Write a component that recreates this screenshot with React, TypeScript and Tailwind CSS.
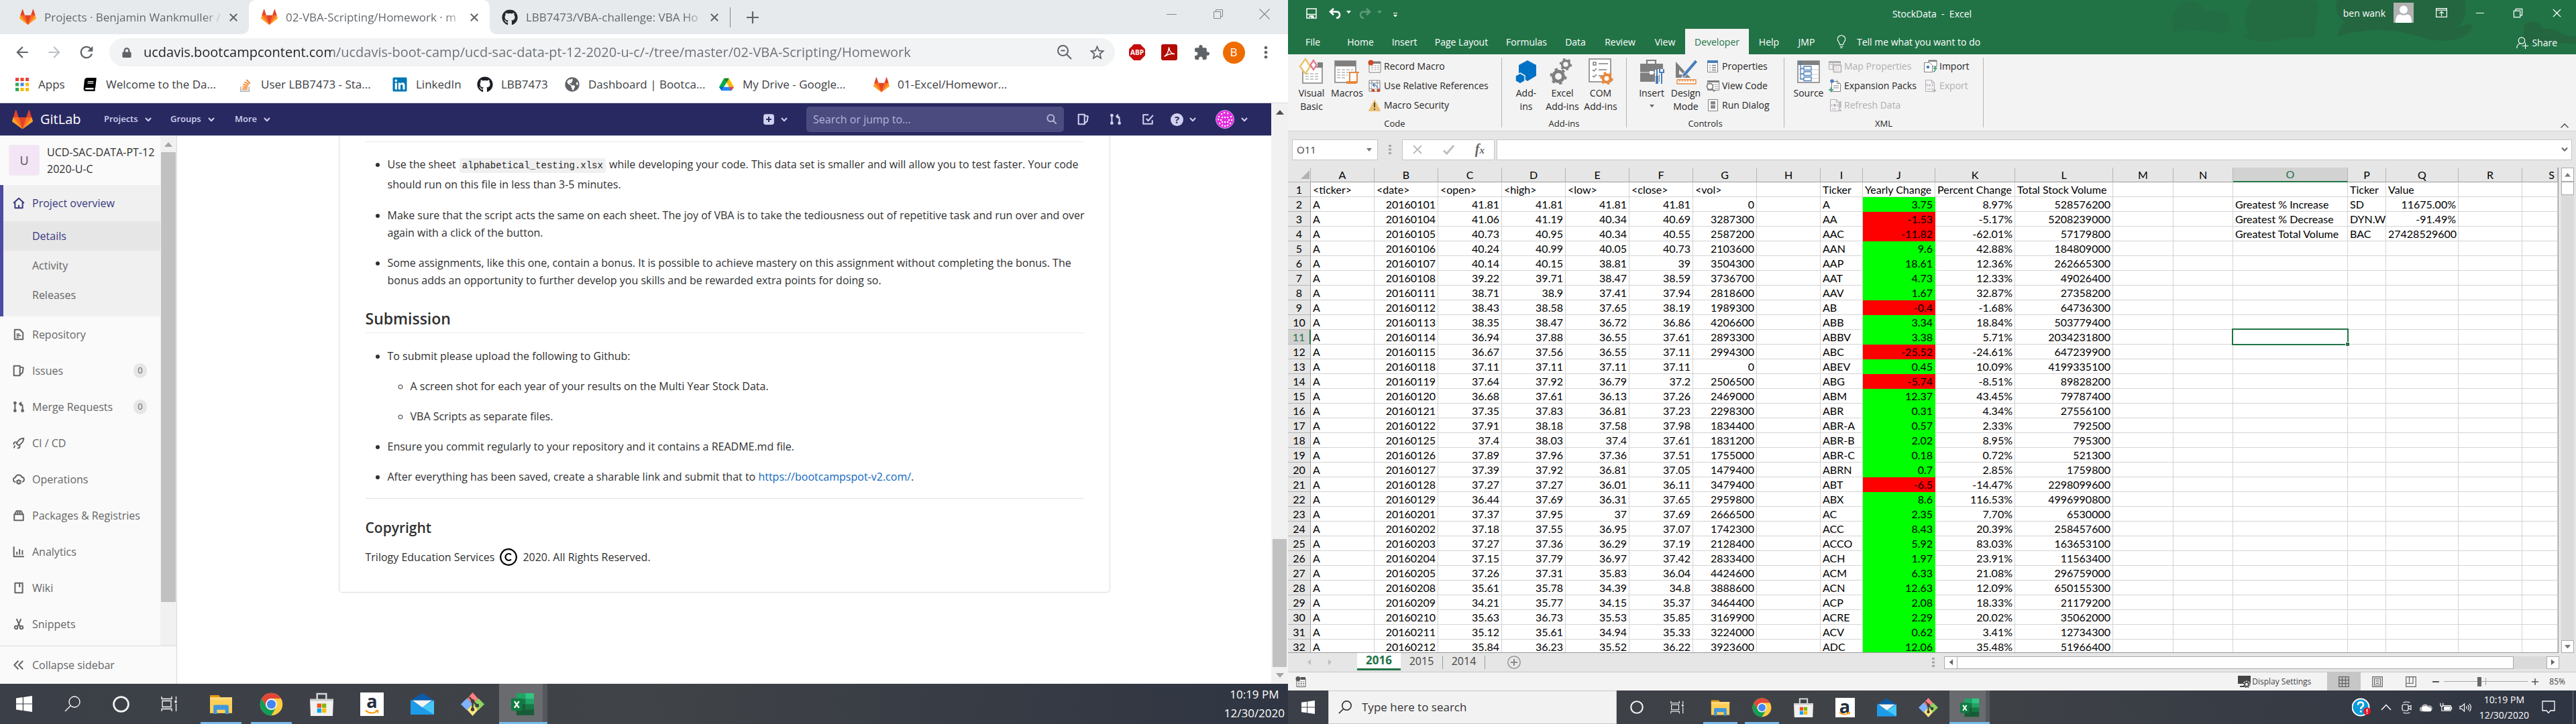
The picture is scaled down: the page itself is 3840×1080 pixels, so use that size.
import type { ReactNode } from "react";
import { FaGithub, FaLinkedin, FaLock, FaGlobeAmericas, FaBook } from "react-icons/fa";
import { MdExtension, MdRefresh, MdArrowBack, MdArrowForward, MdStarBorder, MdMoreVert } from "react-icons/md";

/* ---------- shared glyphs ---------- */

function Tanuki({ className = "" }: { className?: string }) {
  return (
    <svg viewBox="0 0 36 36" className={className} aria-hidden="true">
      <path fill="#e24329" d="M2 14l9.38 9v-9l-4-12.28c-.2-.63-1.17-.63-1.38 0z" />
      <path fill="#e24329" d="M34 14l-9.38 9v-9l4-12.28c.2-.63 1.17-.63 1.38 0z" />
      <path fill="#e24329" d="M18 34.38L3 14h30z" />
      <path fill="#fc6d26" d="M18 34.38L11.38 14H2l4 11z" />
      <path fill="#fc6d26" d="M18 34.38L24.62 14H34l-4 11z" />
      <path fill="#fca326" d="M2 14L.1 20.16c-.18.57 0 1.2.5 1.56L18 34.38z" />
      <path fill="#fca326" d="M34 14l1.9 6.16c.18.57 0 1.2-.5 1.56L18 34.38z" />
    </svg>
  );
}

function Cross({ className = "", w = 2 }: { className?: string; w?: number }) {
  return (
    <svg viewBox="0 0 16 16" className={className} fill="none" stroke="currentColor" strokeWidth={w} aria-hidden="true">
      <path d="M2 2l12 12M14 2L2 14" />
    </svg>
  );
}

function Chevron({ className = "" }: { className?: string }) {
  return (
    <svg viewBox="0 0 10 8" className={className} fill="none" stroke="currentColor" strokeWidth="2" strokeLinecap="round" strokeLinejoin="round" aria-hidden="true">
      <path d="M1.5 2L5 5.7 8.500 2" />
    </svg>
  );
}

function Restore({ className = "", w = 1 }: { className?: string; w?: number }) {
  return (
    <svg viewBox="0 0 16 16" className={className} fill="none" stroke="currentColor" strokeWidth={w} aria-hidden="true">
      <path d="M1.500 4.500h10v10h-10zM4.500 4.500v-3h10v10h-3" />
    </svg>
  );
}

function Magnifier({ className = "", w = 1.500, flip = false }: { className?: string; w?: number; flip?: boolean }) {
  return (
    <svg viewBox="0 0 24 24" className={className} fill="none" stroke="currentColor" strokeWidth={w} aria-hidden="true">
      {flip ? <path d="M9 15L1 23M15 1a8 8 0 1 1 0 16 8 8 0 0 1 0-16z" /> : <path d="M15 15l7 7M9.500 2a7.500 7.500 0 1 1 0 15 7.500 7.500 0 0 1 0-15z" />}
    </svg>
  );
}

/* ---------- browser ---------- */

function BrowserTab({ icon, title, active, box }: { icon: ReactNode; title: string; active?: boolean; box: string }) {
  return (
    <div className={`flex h-full shrink-0 items-center pr-[13px] ${box} ${active ? "rounded-t-[10px] bg-white" : ""}`}>
      <button className="flex min-w-0 flex-1 items-center gap-3 text-left">
        <span className="flex w-[25px] shrink-0 justify-center">{icon}</span>
        <span className="bg-[linear-gradient(90deg,#5f6368_236px,#5f636830_262px)] bg-clip-text text-[17px] whitespace-nowrap text-transparent">{title}</span>
      </button>
      <button aria-label="Close tab" className="ml-[11px] flex w-5 justify-center text-[#5f6368]">
        <Cross className="size-[14px]" w={2.200} />
      </button>
    </div>
  );
}

function TabStrip() {
  return (
    <div className="flex h-[51px] shrink-0 bg-white">
      <div className="rounded-br-[10px] bg-[#e7eaed]">
        <BrowserTab box="w-[371px] pl-[29px]" icon={<Tanuki className="size-[25px]" />} title="Projects · Benjamin Wankmuller /" />
      </div>
      <div className="bg-[linear-gradient(#e7eaed_50%,#fff_50%)]">
        <BrowserTab active box="w-[359px] pl-[18px]" icon={<Tanuki className="size-[25px]" />} title="02-VBA-Scripting/Homework · m" />
      </div>
      <div className="flex flex-1 items-center rounded-bl-[10px] bg-[#e7eaed]">
        <BrowserTab box="w-[358px] pl-[17px]" icon={<FaGithub className="size-6 text-[#24292e]" />} title="LBB7473/VBA-challenge: VBA Ho" />
        <span className="h-[30px] w-px bg-[#80868b]" />
        <button aria-label="New tab" className="ml-6 text-[#5f6368]">
          <svg viewBox="0 0 18 18" className="size-[18px]" stroke="currentColor" strokeWidth="2.200"><path d="M9 0v18M0 9h18" /></svg>
        </button>
        <div className="ml-auto flex h-full items-start pr-[1px] text-[#80868b]">
          <button aria-label="Minimize" className="flex h-[42px] w-[69px] items-center justify-center"><span className="h-px w-[15px] bg-current" /></button>
          <button aria-label="Restore" className="flex h-[42px] w-[69px] items-center justify-center"><Restore className="size-4" /></button>
          <button aria-label="Close" className="flex h-[42px] w-[69px] items-center justify-center"><Cross className="size-5" w={0.9} /></button>
        </div>
      </div>
    </div>
  );
}

function ToolButton({ label, children }: { label: string; children: ReactNode }) {
  return <button aria-label={label} className="flex h-[42px] w-12 shrink-0 items-center justify-center">{children}</button>;
}

function Toolbar() {
  return (
    <div className="flex h-[54px] shrink-0 items-center px-[9px] text-[#5f6368]">
      <ToolButton label="Back"><MdArrowBack className="size-[26px]" /></ToolButton>
      <ToolButton label="Forward"><MdArrowForward className="size-[26px] text-[#bdc1c6]" /></ToolButton>
      <ToolButton label="Reload"><MdRefresh className="size-[28px]" /></ToolButton>
      <div className="ml-[10px] flex h-[42px] flex-1 items-center rounded-full bg-[#f1f3f4] pr-[3px] pl-4">
        <FaLock className="w-5 text-[15px]" />
        <input
          aria-label="Address"
          className="ml-[15px] min-w-0 flex-1 bg-[linear-gradient(90deg,#202124_281px,#6b6f74_281px)] bg-clip-text text-[20px] text-transparent outline-none"
          defaultValue="ucdavis.bootcampcontent.com/ucdavis-boot-camp/ucd-sac-data-pt-12-2020-u-c/-/tree/master/02-VBA-Scripting/Homework"
        />
        <ToolButton label="Zoom">
          <svg viewBox="0 0 24 24" className="size-6" fill="none" stroke="currentColor" strokeWidth="2"><path d="M15 15l7 7M9.500 2a7.500 7.500 0 1 1 0 15 7.500 7.500 0 0 1 0-15zM6.500 9.500h6" /></svg>
        </ToolButton>
        <ToolButton label="Bookmark"><MdStarBorder className="size-[27px]" /></ToolButton>
      </div>
      <div className="ml-[9px] flex">
        <ToolButton label="Adblock Plus">
          <span className="flex size-6 items-center justify-center bg-[#c70d0d] text-[10px] font-bold text-white [clip-path:polygon(30%_0,70%_0,100%_30%,100%_70%,70%_100%,30%_100%,0_70%,0_30%)]">ABP</span>
        </ToolButton>
        <ToolButton label="Adobe Acrobat">
          <svg viewBox="0 0 24 24" className="size-6"><rect width="24" height="24" rx="3" fill="#b30b00" /><path d="M5 18c3-2 6-7 6.500-13 1 6 4 9 8 9.500-4-.5-9 0-13 3" fill="none" stroke="#fff" strokeWidth="1.500" strokeLinecap="round" strokeLinejoin="round" /></svg>
        </ToolButton>
        <ToolButton label="Extensions"><MdExtension className="size-[25px]" /></ToolButton>
        <ToolButton label="Profile"><span className="flex size-[33px] items-center justify-center rounded-full bg-[#ef6c00] text-[17px] text-white">B</span></ToolButton>
        <ToolButton label="Menu"><MdMoreVert className="size-[28px]" /></ToolButton>
      </div>
    </div>
  );
}

const appColors = ["#ea4335", "#ea4335", "#ea4335", "#34a853", "#4285f4", "#fbbc04", "#34a853", "#fbbc04", "#fbbc04"];

const bookmarks: { label: string; box: string; icon: ReactNode }[] = [
  { label: "Apps", box: "w-[101px]", icon: <svg viewBox="0 0 20 20" className="size-5">{appColors.map((c, i) => <rect key={i} x={(i % 3) * 7.500} y={Math.floor(i / 3) * 7.500} width="5" height="5" fill={c} />)}</svg> },
  { label: "Welcome to the Da...", box: "w-[231px]", icon: <FaBook className="size-5 -skew-x-6 text-black" /> },
  {
    label: "User LBB7473 - Sta...", box: "w-[231px]",
    icon: <svg viewBox="0 0 20 22" className="size-[21px]" fill="none" strokeWidth="2"><path d="M3 14v7h13v-7" stroke="#bcbbbb" /><path d="M5.500 17.500h8M5.700 14l8 .9M6.700 10.300l7.700 2.200M8.800 6.500l7 4M12 3l5.500 6" stroke="#f48024" /></svg>,
  },
  { label: "LinkedIn", box: "w-[127px]", icon: <FaLinkedin className="size-6 text-[#0077b5]" /> },
  { label: "LBB7473", box: "w-[130px]", icon: <FaGithub className="size-6 text-[#1b1f23]" /> },
  { label: "Dashboard | Bootca...", box: "w-[230px]", icon: <FaGlobeAmericas className="size-[22px] text-[#5f6368]" /> },
  {
    label: "My Drive - Google...", box: "w-[231px]",
    icon: <svg viewBox="0 0 24 22" className="size-[22px]"><path d="M8 1h8l8 14h-8z" fill="#ffba00" /><path d="M8 1l4 7-8 13-4-6z" fill="#00ac47" /><path d="M8 15h16l-4 6H4z" fill="#2684fc" /><path d="M0 15h8l-4 6z" fill="#0066da" /><path d="M16 15h8l-4 6z" fill="#ea4335" /><path d="M8 1h8l-4 7z" fill="#00832d" /></svg>,
  },
  { label: "01-Excel/Homewor...", box: "", icon: <Tanuki className="size-[25px]" /> },
];

function Bookmarks() {
  return (
    <nav aria-label="Bookmarks" className="flex h-[49px] shrink-0 items-center border-b border-[#dadce0] pb-[6px] pl-[21px] text-[17px] text-[#3c4043]">
      {bookmarks.map((b) => (
        <a key={b.label} href="#" className={`flex shrink-0 items-center gap-3 whitespace-nowrap ${b.box}`}>
          <span className="flex w-6 justify-center">{b.icon}</span>
          {b.label}
        </a>
      ))}
    </nav>
  );
}

/* ---------- gitlab ---------- */

const glyphs: Record<string, ReactNode> = {
  home: <path d="M1 8l7-6.500L15 8M3 7v7.500h10V7M8 14v-3.500" />,
  doc: <><path d="M2.500 1.500h7l4 4v9h-11z" /><path d="M5 7.500h4M5 9.500h6M5 11.800h3" strokeWidth="1.500" /></>,
  issues: <path d="M1.500 1.500h8v13h-8zM10 3l4 1-1 6.500L10 13" />,
  merge: <><path d="M3 4v8M13 12V7q0-3-4-3M11.500 1.500L9 4l2.500 2.500" /><circle cx="3" cy="2.800" r="1.200" fill="currentColor" /><circle cx="3" cy="13" r="1.200" fill="currentColor" /><circle cx="13" cy="13" r="1.200" fill="currentColor" /></>,
  rocket: <><path d="M14.500 1.500Q8.500 1.500 5 8.500L7.500 11Q14.500 7.500 14.500 1.500z" /><path d="M5 6.500L2 7l-1 3M9.500 11l-.5 3-3 1M3 11l-1.500 3.500" /></>,
  cloud: <><path d="M4 11.500a3 3 0 0 1-.500-6A4.500 4.500 0 0 1 12 5a3.300 3.300 0 0 1 .500 6.500" /><circle cx="8" cy="11.500" r="2.200" /><path d="M8 7.800v1.500M8 13.700v1.500M4.800 9.700l1.300.8M9.900 12.500l1.300.8M11.200 9.700l-1.300.8M6.100 12.500l-1.300.8" strokeWidth="1.300" /></>,
  pack: <path d="M2 6.500h12v8H2zM2.500 6.500L5 2h6l2.500 4.500M6 6.500L7 3M10 6.500L9 3" />,
  chart: <path d="M1.500 1v13.500H15M5.500 8v4M9 4.500V12M12.800 6v6" />,
  wiki: <path d="M3 1.500h10v13H3zM9 2v5" />,
  snip: <><path d="M5 1l4.500 10M11 1L6.500 11" /><circle cx="4.500" cy="12.500" r="2" /><circle cx="11.500" cy="12.500" r="2" /></>,
  collapse: <path d="M7.500 2.500L2 8l5.500 5.500M13.500 2.500L8 8l5.500 5.500" />,
  plus: <><rect x="1" y="1" width="14" height="14" rx="3" fill="currentColor" stroke="none" /><path d="M8 4.500v7M4.500 8h7" stroke="#292961" /></>,
  todo: <path d="M9 2H2v12h12V9M6 7l2.500 3L15 2.500" />,
};

function Glyph({ name, className = "size-[18px]" }: { name: string; className?: string }) {
  return <svg viewBox="0 0 16 16" className={`shrink-0 ${className}`} fill="none" stroke="currentColor" strokeWidth="1.800" strokeLinejoin="round" aria-hidden="true">{glyphs[name]}</svg>;
}

const avatarDots = [[9, 6], [13, 4], [18, 5], [5, 10], [10, 11], [14, 11], [18, 11], [23, 10], [4, 14], [8, 15], [20, 15], [24, 15], [10, 18], [14, 18], [18, 18], [6, 20], [22, 20], [10, 23], [14, 24], [18, 23]];

function NavMenu({ label, box }: { label: string; box: string }) {
  return (
    <button className={`flex items-center gap-[10px] text-[13px] font-semibold ${box}`}>
      {label}
      <Chevron className="h-[9px] w-[10px]" />
    </button>
  );
}

function GitlabHeader() {
  return (
    <header className="flex h-12 shrink-0 items-center bg-[#292961] pr-[35px] pl-[18px] text-[#d1d1f0]">
      <a href="#" className="flex w-[137px] items-center gap-[11px] text-[20px] font-medium text-white">
        <Tanuki className="size-[31px]" />
        GitLab
      </a>
      <NavMenu label="Projects" box="w-[99px]" />
      <NavMenu label="Groups" box="w-[96px]" />
      <NavMenu label="More" box="" />
      <div className="ml-auto flex items-center">
        <button aria-label="New" className="flex items-center gap-[9px]"><Glyph name="plus" /><Chevron className="h-[9px] w-[10px]" /></button>
        <label className="mr-[5px] ml-[28px] flex h-[38px] w-[384px] items-center rounded-[5px] bg-[#4b4b7f] px-[10px]">
          <input aria-label="Search" placeholder="Search or jump to..." className="min-w-0 flex-1 text-[16px] outline-none placeholder:text-[#b4b4dc]" />
          <Magnifier className="size-4 text-[#b4b4dc]" w={3} />
        </label>
        <button aria-label="Issues" className="flex w-12 justify-center"><Glyph name="issues" /></button>
        <button aria-label="Merge requests" className="flex w-12 justify-center"><Glyph name="merge" /></button>
        <button aria-label="To-do list" className="flex w-12 justify-center"><Glyph name="todo" /></button>
        <button aria-label="Help" className="ml-[10px] flex items-center gap-[9px]">
          <span className="flex size-[19px] items-center justify-center rounded-full bg-[#d1d1f0] text-[15px] font-bold text-[#292961]">?</span>
          <Chevron className="h-[9px] w-[10px]" />
        </button>
        <button aria-label="Account" className="ml-[29px] flex items-center gap-[10px]">
          <svg viewBox="0 0 28 28" className="size-7"><circle cx="14" cy="14" r="13.500" fill="#e62be0" stroke="#c9a9e8" />{avatarDots.map(([x, y], i) => <rect key={i} x={x - 1} y={y - 1} width="2.200" height="2.200" fill="#fff" />)}</svg>
          <Chevron className="h-[9px] w-[10px]" />
        </button>
      </div>
    </header>
  );
}

const sideItems: [string, string, boolean?][] = [
  ["doc", "Repository"], ["issues", "Issues", true], ["merge", "Merge Requests", true], ["rocket", "CI / CD"], ["cloud", "Operations"],
  ["pack", "Packages & Registries"], ["chart", "Analytics"], ["wiki", "Wiki"], ["snip", "Snippets"],
];

function Sidebar() {
  return (
    <aside className="flex w-[264px] shrink-0 flex-col border-r border-[#dbdbdb] bg-[#fafafa] text-[16px] text-[#666]">
      <div className="flex min-h-0 flex-1">
        <div className="flex min-w-0 flex-1 flex-col overflow-hidden">
          <a href="#" className="flex h-[73px] shrink-0 gap-[11px] pt-[12px] pl-[13px] leading-[25px] font-medium whitespace-nowrap text-[#303030]">
            <span className="mt-px flex size-[46px] shrink-0 items-center justify-center rounded-[4px] border border-[#eee] bg-[#f3e5f5] text-[18px] font-normal text-[#555]">U</span>
            <span>UCD-SAC-DATA-PT-12<br />2020-U-C</span>
          </a>
          <div className="shrink-0 border-l-[5px] border-[#4b4ba3] bg-[#f0f0f0] pb-[10px]">
            <a href="#" className="flex h-[54px] items-center gap-[11px] pl-[14px] font-medium text-[#393982]"><Glyph name="home" />Project overview</a>
            <a href="#" className="flex h-11 items-center bg-[#e6e6e6] pl-[43px] font-medium text-[#393982]">Details</a>
            <a href="#" className="flex h-11 items-center pl-[43px]">Activity</a>
            <a href="#" className="flex h-11 items-center pl-[43px]">Releases</a>
          </div>
          {sideItems.map(([icon, label, badge]) => (
            <a key={label} href="#" className="flex h-[54px] shrink-0 items-center gap-[11px] pr-5 pl-[19px]">
              <Glyph name={icon} />
              <span className="whitespace-nowrap">{label}</span>
              {badge && <span className="ml-auto flex h-[22px] w-5 items-center justify-center rounded-full bg-[#e6e6e6] text-[13px]">0</span>}
            </a>
          ))}
        </div>
        <div className="flex w-[24px] shrink-0 flex-col bg-[#f1f1f1] px-px">
          <span className="flex h-6 items-center justify-center"><svg viewBox="0 0 12 7" className="w-3" fill="#a3a3a3"><path d="M6 0l6 7H0z" /></svg></span>
          <span className="h-[671px] bg-[#c1c1c1]" />
        </div>
      </div>
      <button className="flex h-[57px] shrink-0 items-center gap-[11px] border-t border-[#dbdbdb] pl-[19px]"><Glyph name="collapse" />Collapse sidebar</button>
    </aside>
  );
}

function Readme() {
  return (
    <main className="min-w-0 flex-1 text-[16px] leading-[26px] text-[#303030]">
      <article className="mx-auto w-full max-w-[1150px] rounded-b-[5px] border border-t-0 border-[#dbdbdb] px-[39px] pt-2 pb-[39px]">
        <hr className="border-[#eaeaea]" />
        <ul className="mt-[19px] flex list-disc flex-col gap-[19px] pl-[33px] whitespace-nowrap">
          <li className="leading-[28px]">
            Use the sheet <code className="mx-px rounded-[4px] bg-[#f0f0f0] px-1 py-[3px] font-['Liberation_Mono',monospace] text-[14px] text-[#1f1f1f]">alphabetical_testing.xlsx</code> while developing your code. This data set is smaller and will allow you to test faster. Your code<br />should run on this file in less than 3-5 minutes.
          </li>
          <li>Make sure that the script acts the same on each sheet. The joy of VBA is to take the tediousness out of repetitive task and run over and over<br />again with a click of the button.</li>
          <li>Some assignments, like this one, contain a bonus. It is possible to achieve mastery on this assignment without completing the bonus. The<br />bonus adds an opportunity to further develop you skills and be rewarded extra points for doing so.</li>
        </ul>
        <h2 className="mt-[29px] border-b border-[#eaeaea] pb-[6px] text-[23px] leading-[30px] font-semibold">Submission</h2>
        <ul className="mt-[21px] flex list-disc flex-col gap-[19px] pl-[33px]">
          <li>
            To submit please upload the following to Github:
            <ul className="mt-[19px] flex list-[circle] flex-col gap-[19px] pl-[34px]">
              <li>A screen shot for each year of your results on the Multi Year Stock Data.</li>
              <li>VBA Scripts as separate files.</li>
            </ul>
          </li>
          <li>Ensure you commit regularly to your repository and it contains a README.md file.</li>
          <li>After everything has been saved, create a sharable link and submit that to <a href="#" className="text-[#1068bf]">https://bootcampspot-v2.com/</a>.</li>
        </ul>
        <hr className="mt-[19px] border-[#e1e1e1]" />
        <h3 className="mt-[30px] text-[21px] font-semibold">Copyright</h3>
        <p className="mt-[18px] flex items-center gap-2">
          Trilogy Education Services
          <svg viewBox="0 0 26 26" className="size-[26px]" fill="none" stroke="#000" role="img" aria-label="Copyright"><circle cx="13" cy="13" r="11.800" strokeWidth="2.200" /><path d="M17 9.500a5 5 0 1 0 0 7" strokeWidth="2.200" /></svg>
          2020. All Rights Reserved.
        </p>
      </article>
    </main>
  );
}

/* ---------- taskbar icons ---------- */

const WindowsLogo = ({ className = "" }) => (
  <svg viewBox="0 0 24 24" className={className} fill="#fff"><path d="M0 3.400L9.800 2v9.500H0zM11 1.900L24 0v11.500H11zM0 12.500h9.800V22L0 20.600zM11 12.500h13V24l-13-1.900z" /></svg>
);
const CortanaRing = ({ className = "" }) => (
  <svg viewBox="0 0 24 24" className={className} fill="none" stroke="#f2f2f2" strokeWidth="2.600"><circle cx="12" cy="12" r="10.500" /></svg>
);
const TaskView = ({ className = "" }) => (
  <svg viewBox="0 0 24 24" className={className} fill="none" stroke="#fff" strokeWidth="1.300"><path d="M1 1v3.500h15V1M1 23v-3.500h15V23M2 7.500h13v9H2zM22.500 1v5M22.500 12v11" /><path d="M20.500 7h3v3.500h-3z" fill="#fff" stroke="none" /></svg>
);

const apps: { name: string; icon: ReactNode; open?: boolean; active?: boolean }[] = [
  { name: "File Explorer", open: true, icon: <svg viewBox="0 0 34 32" className="size-full"><path d="M1 3h13l3 4h-16z" fill="#e39c12" /><rect x="1" y="6" width="32" height="23" fill="#ffcf56" /><path d="M1 6h32v4H1z" fill="#ffd877" /><path d="M6 30V19q0-2 2-2h18q2 0 2 2v11h-5v-6H11v6z" fill="#3f97dd" /></svg> },
  { name: "Google Chrome", open: true, icon: <svg viewBox="0 0 48 48" className="size-full"><circle cx="24" cy="24" r="23" fill="#ffcd40" /><path d="M4.100 12.500A23 23 0 0 1 43.900 12.500H24a11.500 11.500 0 0 0-10 17.200z" fill="#e2463a" /><path d="M4.100 12.500A23 23 0 0 0 24 47l10-17.300A11.500 11.500 0 0 1 14 29.700z" fill="#0f9d58" /><circle cx="24" cy="24" r="11.500" fill="#f1f1f1" /><circle cx="24" cy="24" r="9" fill="#4285f4" /></svg> },
  { name: "Microsoft Store", icon: <svg viewBox="0 0 36 36" className="size-full"><path d="M11 12V2h14v10" fill="none" stroke="#d5d5d5" strokeWidth="2.500" /><path d="M0 10h36l-1 26H1z" fill="#f1f1f1" /><path d="M0 10h36v3H0z" fill="#cfcfcf" /><path d="M11 17h6.500v6.500H11z" fill="#f25022" /><path d="M18.500 17H25v6.500h-6.500z" fill="#7fba00" /><path d="M11 24.500h6.500V31H11z" fill="#00a4ef" /><path d="M18.500 24.500H25V31h-6.500z" fill="#ffb900" /></svg> },
  { name: "Amazon", icon: <span className="flex size-full flex-col items-center bg-white"><span className="h-3/4 text-[27px] leading-[26px] font-bold text-[#232f3e]">a</span><svg viewBox="0 0 24 7" className="w-3/5" fill="none" stroke="#f90" strokeWidth="2.200"><path d="M1 1q10 8 20 1M18 1h4v4" /></svg></span> },
  { name: "Mail", icon: <svg viewBox="0 0 36 34" className="size-full"><path d="M0 11L18 0l18 11z" fill="#0b5aa8" /><path d="M0 11h36v22H0z" fill="#1a8fe0" /><path d="M0 11l36 22H0z" fill="#1e9be8" /><path d="M36 11v22L18 22z" fill="#45c8f5" /><path d="M3 11h30L18 22z" fill="#f4f4f4" /></svg> },
  { name: "Git GUI", icon: <svg viewBox="0 0 36 36" className="size-full"><path d="M18 0l8.500 9.500L18 18l-8.500-8.500z" fill="#ff8080" /><path d="M9 9l9 9-9 9-9-9z" fill="#80b3ff" /><path d="M27 9l9 9-9 9-9-9z" fill="#8dd35f" /><path d="M18 18l8.500 8.500L18 36l-8.500-9.500z" fill="#ffe680" /><path d="M13 7l5 6v13M18 13l7 7" fill="none" stroke="#3d3d3d" strokeWidth="2.400" /><circle cx="18" cy="13" r="2.800" fill="#3d3d3d" /><circle cx="18" cy="26" r="2.800" fill="#3d3d3d" /><circle cx="25" cy="20" r="2.800" fill="#3d3d3d" /></svg> },
  { name: "Excel", active: true, icon: <svg viewBox="0 0 36 34" className="size-full"><path d="M8 0h14v9H8z" fill="#21a366" /><path d="M22 0h13v9H22z" fill="#33c481" /><path d="M8 9h14v8H8z" fill="#107c41" /><path d="M22 9h13v8H22z" fill="#21a366" /><path d="M8 17h14v8H8z" fill="#185c37" /><path d="M22 17h13v8H22z" fill="#107c41" /><path d="M8 25h27v9H8z" fill="#185c37" /><rect x="0" y="8" width="17" height="19" rx="1.500" fill="#107c41" /><path d="M5 12.500l7 10M12 12.500l-7 10" stroke="#fff" strokeWidth="2.400" /></svg> },
];

function AppButton({ app, big }: { app: (typeof apps)[number]; big?: boolean }) {
  return (
    <div className={`flex h-full shrink-0 justify-center ${big ? "w-[75px]" : "w-[62px]"}`}>
      <button aria-label={app.name} className={`flex h-full flex-col items-center ${big ? "w-[72px]" : "w-[60px]"} ${app.active ? "bg-linear-to-r from-[#696b6e] from-90% to-[#54575b] to-90%" : ""}`}>
        <span className="flex flex-1 items-center pt-[3px]"><span className={`flex ${big ? "size-[35px]" : "size-[29px]"}`}>{app.icon}</span></span>
        <span className={`h-[3px] ${app.active ? "w-full" : big ? "w-[61px]" : "w-[51px]"} ${app.open || app.active ? "bg-[#76b9ed]" : ""}`} />
      </button>
    </div>
  );
}

function LeftTaskbar() {
  const cell = "flex h-full w-[72px] items-center justify-center text-white";
  return (
    <footer className="flex h-[60px] shrink-0 bg-linear-to-r from-[#3b3f47] via-[#404347] to-[#2f3542]">
      <button aria-label="Start" className={cell}><WindowsLogo className="size-6" /></button>
      <button aria-label="Search" className={cell}><Magnifier flip className="size-6" w={1.300} /></button>
      <button aria-label="Cortana" className={cell}><CortanaRing className="size-[25px]" /></button>
      <button aria-label="Task view" className={cell}><TaskView className="size-6" /></button>
      <div className="ml-1 flex">{apps.map((a) => <AppButton key={a.name} app={a} big />)}</div>
      <button className="ml-auto flex flex-col items-center justify-center px-[5px] text-[17px] leading-[28px] text-white"><span>10:19 PM</span><span>12/30/2020</span></button>
    </footer>
  );
}

function Browser() {
  return (
    <section aria-label="Browser" className="flex h-screen min-w-0 flex-col overflow-hidden bg-white font-['Open_Sans','Noto_Sans',sans-serif]">
      <TabStrip />
      <Toolbar />
      <Bookmarks />
      <div className="flex min-h-0 flex-1">
        <div className="flex min-w-0 flex-1 flex-col">
          <GitlabHeader />
          <div className="flex min-h-0 flex-1 border-t border-[#dbdbdb]">
            <Sidebar />
            <Readme />
          </div>
        </div>
        <div className="flex w-[25px] shrink-0 flex-col items-center bg-[#f1f1f1]">
          <svg viewBox="0 0 12 7" className="mt-[10px] w-3" fill="#505050"><path d="M6 0l6 7H0z" /></svg>
          <span className="mt-auto h-[191px] w-[21px] bg-[#c1c1c1]" />
          <svg viewBox="0 0 12 7" className="mt-[9px] mb-[9px] w-3" fill="#a3a3a3"><path d="M6 7l6-7H0z" /></svg>
        </div>
      </div>
      <LeftTaskbar />
    </section>
  );
}

/* ---------- excel: title bar and ribbon ---------- */

const Caret = ({ className = "" }) => <svg viewBox="0 0 8 5" className={className} fill="currentColor" aria-hidden="true"><path d="M0 0h8L4 5z" /></svg>;

function TitleBar() {
  return (
    <div className="grid h-[43px] grid-cols-[1fr_auto_1fr] text-[14px] text-white">
      <div className="flex items-center pb-[3px] pl-[27px]">
        <button aria-label="Save"><svg viewBox="0 0 16 16" className="size-4" fill="none" stroke="#fff" strokeWidth="1.500"><path d="M1 1h14v14H1z" /><path d="M4.500 15v-4h7v4" fill="#fff" stroke="none" /><path d="M1 9.500h14" /><path d="M6.500 15v-2" stroke="#217346" /></svg></button>
        <button aria-label="Undo" className="ml-[18px]"><svg viewBox="0 0 18 16" className="h-4 w-[18px]" fill="none" stroke="#fff" strokeWidth="2.600"><path d="M7 .8L2 5.500l5 4.700M2.500 5.500H11q5 0 5 4.500t-5 5" /></svg></button>
        <Caret className="mt-[-4px] ml-[8px] w-[7px]" />
        <button aria-label="Redo" className="ml-[12px] text-[#5c9a78]"><svg viewBox="0 0 18 16" className="h-4 w-[18px]" fill="none" stroke="currentColor" strokeWidth="2.600"><path d="M11 .8l5 4.700-5 4.700M15.500 5.500H7q-5 0-5 4.500t5 5" /></svg></button>
        <Caret className="mt-[-4px] ml-[9px] w-[7px] text-[#5c9a78]" />
        <button aria-label="Customize" className="ml-[17px] flex flex-col items-center gap-[2px] pt-1"><span className="h-px w-[6px] bg-white" /><Caret className="w-[6px]" /></button>
      </div>
      <h1 className="self-center pb-[3px] whitespace-pre">StockData  -  Excel</h1>
      <div className="flex items-center justify-end pb-[5px]">
        <span>ben wank</span>
        <svg viewBox="0 0 30 30" className="mr-[13px] ml-3 size-[30px]"><path fill="#b2b2b2" d="M0 0h30v30H0z" /><circle cx="15" cy="10.500" r="6" fill="#fff" /><path d="M3 30q0-13 7-12.500 5 2.500 10 0Q27 17 27 30z" fill="#fff" /></svg>
        <button aria-label="Ribbon display options" className="flex w-[57px] justify-center"><svg viewBox="0 0 17 14" className="h-[14px] w-[17px]" fill="none" stroke="#fff" strokeWidth="1.200"><path d="M.6.600h15.800v12.800H.6zM.6 3.200h15.800M8.500 12V5.500M5.500 8l3-2.800 3 2.800" /></svg></button>
        <button aria-label="Minimize" className="flex w-[57px] justify-center"><span className="h-px w-3 bg-white" /></button>
        <button aria-label="Restore" className="flex w-[57px] justify-center"><Restore className="size-[15px]" w={1.300} /></button>
        <button aria-label="Close" className="flex w-[58px] justify-center"><Cross className="size-[15px]" w={1.400} /></button>
      </div>
    </div>
  );
}

const ribbonTabs: [string, string][] = [
  ["File", "w-[74px]"], ["Home", "w-[68px]"], ["Insert", "w-[63px]"], ["Page Layout", "w-[107px]"], ["Formulas", "w-[87px]"], ["Data", "w-[59px]"],
  ["Review", "w-[74px]"], ["View", "w-[60px]"], ["Developer", "w-[95px]"], ["Help", "w-[60px]"], ["JMP", "w-[52px]"],
];

function RibbonTabs() {
  return (
    <div className="flex h-[38px] text-[14px] text-white">
      {ribbonTabs.map(([t, w]) => (
        <button key={t} className={`shrink-0 whitespace-nowrap ${w} ${t === "Developer" ? "bg-[#f3f3f3] text-[#217346]" : ""}`}>{t}</button>
      ))}
      <button className="ml-[19px] flex items-center gap-4">
        <svg viewBox="0 0 14 20" className="h-5 w-[14px]" fill="none" stroke="#fff" strokeWidth="1.200"><path d="M4.500 14.500q0-2-2-4.500a5.700 5.700 0 1 1 9 0q-2 2.500-2 4.500zM4.500 17h5M5.500 19.200h3" /></svg>
        Tell me what you want to do
      </button>
      <button className="ml-auto flex items-center gap-[5px] pt-[3px] pr-7">
        <svg viewBox="0 0 18 18" className="size-[18px]" fill="none" stroke="#fff" strokeWidth="1.200"><circle cx="8" cy="5.500" r="4.700" /><path d="M.8 17q.2-6.500 5.500-7M8.500 13.500H18M13.500 9v9" /></svg>
        Share
      </button>
    </div>
  );
}

const big: Record<string, ReactNode> = {
  vb: <><path d="M7 14h29v24H7z" fill="#fff" stroke="#7f7f7f" strokeWidth="1.500" /><path d="M29 7h8v8h-8z" fill="#7f7f7f" /><path d="M11 24h21M11 28h21M11 32h21" stroke="#b5b5b5" strokeWidth="1.500" strokeDasharray="5 2" /><path d="M11 2l7 11-7 11-8-11z" fill="#fff" stroke="#e9c46f" strokeWidth="2.500" /><path d="M23 4l4.500 7-4.500 7-4.500-7z" fill="#fff" stroke="#e5718b" strokeWidth="2.200" /></>,
  macros: <><path d="M2 5h31v32H2z" fill="#fff" stroke="#7f7f7f" strokeWidth="1.500" /><path d="M2 5h31v8H2z" fill="#7f7f7f" /><path d="M5 18h24M5 22h18M5 26h16M5 30h14" stroke="#b5b5b5" strokeWidth="1.500" strokeDasharray="5 2" /><path d="M24 22h14M24 21v16h11V23" fill="#fff" stroke="#e8873a" strokeWidth="2" /><path d="M19 35h15v4H19z" fill="#e8873a" /></>,
  addins: <><path d="M22 4l13 7v16l-13 8-13-8V11z" fill="#0072c6" /><path d="M11 23l7 4v8l-7 4-7-4v-8z" fill="#0072c6" stroke="#f3f3f3" strokeWidth="1.500" /></>,
  gears: <g fill="none" stroke="#7f7f7f"><circle cx="25" cy="10" r="5.500" strokeWidth="3.500" /><circle cx="25" cy="10" r="8" strokeWidth="2.500" strokeDasharray="3.500 4.800" /><circle cx="14" cy="28" r="7.500" strokeWidth="5" /><circle cx="14" cy="28" r="11" strokeWidth="3" strokeDasharray="4.500 7" /></g>,
  com: <><path d="M3 2h32v34H3z" fill="#fff" stroke="#7f7f7f" strokeWidth="1.500" /><path d="M9 7h4v4H9zM17 9h14M8 18l2 2 4-4M17 18h12M8 27l2 2 4-4M17 27h6" fill="none" stroke="#7f7f7f" strokeWidth="1.500" /><g fill="none" stroke="#e8873a"><circle cx="29" cy="31" r="5.500" strokeWidth="4" /><circle cx="29" cy="31" r="8.500" strokeWidth="2.500" strokeDasharray="3.800 5" /></g></>,
  insert: <><path d="M13 9V4h13v5" fill="none" stroke="#7f7f7f" strokeWidth="2.200" /><path d="M3 9h34v27H3z" fill="#7f7f7f" /><path d="M3 22h34" stroke="#f3f3f3" /><path d="M17 20h6v5h-6z" fill="#fff" /><path d="M28 18v10M28 28v11M35 20v19M32 17v5h6v-5" stroke="#f3f3f3" strokeWidth="6" fill="none" /><path d="M28 17v10M35 23v16M32 17v5h6v-5" stroke="#4a7ebb" strokeWidth="2" fill="none" /><path d="M28 27v12" stroke="#4a7ebb" strokeWidth="4" /></>,
  design: <><path d="M5 6l22 24H5zM10 18v7h7z" fill="#7f7f7f" fillRule="evenodd" /><path d="M34 3l3.500 3.500L19 28l-5 2 1.500-5.500z" fill="#4a7ebb" stroke="#f3f3f3" /><path d="M7 33h28v6H7zM11 33v3M15 33v3M19 33v3M23 33v3M27 33v3M31 33v3" fill="#fff" stroke="#e8873a" strokeWidth="1.300" /></>,
  source: <><path d="M4 5h32v32H4z" fill="#fff" stroke="#7f7f7f" strokeWidth="1.500" /><path d="M4 5h32v6H4z" fill="#7f7f7f" /><path d="M4 18h32M4 25h32M4 31h32" stroke="#c5c5c5" /><path d="M8 5v27h5M8 16h5M8 24h5" fill="none" stroke="#4a7ebb" strokeWidth="1.300" /><path d="M13 13h11v5.500H13zM13 21h11v5.500H13zM13 29h11v5.500H13z" fill="#fff" stroke="#4a7ebb" strokeWidth="1.300" /></>,
};

const page = "M3.500 1.500h9l4 4v13h-13zM12.500 1.500v4h4";
const small: Record<string, ReactNode> = {
  record: <><path d="M2 3h17v16H2z" fill="#fff" stroke="#7f7f7f" /><path d="M8 3h11v3H8z" fill="#7f7f7f" /><path d="M5 9h12M5 12h12M5 15h12" stroke="#9a9a9a" strokeDasharray="3 1.500" /><circle cx="4.500" cy="4.500" r="4" fill="#d24726" /></>,
  relative: <><path d="M2 2h16v16H2zM2 6h16M2 14h16M6 2v16M14 2v16" fill="#fff" stroke="#7f7f7f" /><path d="M6 7h8v7H6z" fill="#fff" /><path d="M14 13q0-5-6-4M10 6L7.500 9l3 3" fill="none" stroke="#4a7ebb" strokeWidth="1.500" /><path d="M6 15h4v4H6zM14 15h4v4h-4z" fill="#d24726" /></>,
  warn: <><path d="M10 1l9.500 18H.5z" fill="#ebc177" /><path d="M10 6v7M10 15v2" stroke="#5a4a2a" strokeWidth="2" /></>,
  props: <><path d="M2.500 1.500h15v17h-15z" fill="#fff" stroke="#7f7f7f" /><path d="M2 1h16v4H2z" fill="#4a7ebb" /><path d="M9 8.500h6M9 12h6M9 15.500h6M5.500 8.500h1.500M5.500 12h1.500M5.500 15.500h1.500" stroke="#7f7f7f" strokeWidth="1.300" /></>,
  code: <><path d="M2.500 2.500h17v14h-17z" fill="#fff" stroke="#7f7f7f" /><path d="M2 2h18v3H2z" fill="#7f7f7f" /><path d="M11 8h7M13 11h5M13 14h5" stroke="#9a9a9a" /><circle cx="6" cy="11" r="4.500" fill="#fff" stroke="#7f7f7f" strokeWidth="1.800" /><path d="M9 14.500l4 4" stroke="#7f7f7f" strokeWidth="2.200" /></>,
  run: <><path d="M3.500 1.500h14v17h-14z" fill="#fff" stroke="#7f7f7f" /><path d="M7 4h7v11H7z" fill="#8a8a8a" /><path d="M7 9.500h7" stroke="#fff" /></>,
  map: <><path d="M1.500 2.500h17v12h-17zM1.500 7h17M7 5v10" fill="none" stroke="#b0b0b0" /><path d="M1 2h18v3H1z" fill="#b0b0b0" /><path d="M8.500 8.500h11v10h-11z" fill="#f7f2f7" stroke="#b0b0b0" strokeWidth="1.500" /><path d="M11 12h6M11 15h6" stroke="#b0b0b0" strokeDasharray="2 1" /></>,
  expand: <><path d="M5.500 3.500h9l4 4v11h-13zM13.500 1.500v5h5" fill="#fff" stroke="#7f7f7f" /><path d="M8 10h8M8 13h8" stroke="#7f7f7f" /><circle cx="6" cy="3" r="2.800" fill="#4a7ebb" /><path d="M1 16h7M4.500 12.500v7" stroke="#4ba181" strokeWidth="2" /></>,
  refresh: <><path d={page} fill="#f7f2f7" stroke="#b0b0b0" /><circle cx="10" cy="10" r="2" fill="#b0b0b0" /><path d="M6.500 8L5 10l1.500 2M13.500 8l1.500 2-1.500 2M6 15.500h6" fill="none" stroke="#b0b0b0" /><path d="M18.500 4v10M18.500 16v3" stroke="#b0b0b0" strokeWidth="2" /></>,
  import: <><path d="M8 1h12v9H8z" fill="#fff" stroke="#7f7f7f" /><path d="M8 1h12v2H8z" fill="#7f7f7f" /><path d="M1.500 4.500h8l4 4v10h-12z" fill="#fff" stroke="#7f7f7f" /><circle cx="7" cy="11" r="2.300" fill="#4a7ebb" /><path d="M15 18q3 0 3-6M15.500 14l2.500-3 2 3" fill="none" stroke="#4ba181" strokeWidth="1.700" /></>,
  export: <><path d={page} fill="#f7f2f7" stroke="#b0b0b0" /><circle cx="9.500" cy="9" r="1.500" fill="#b0b0b0" /><path d="M6.500 7L5 9l1.500 2M13 7l1.500 2-1.500 2M6 15h5M13 14q0 3 5 3M15.500 14.500l3 2.500-3 2.500" fill="none" stroke="#b0b0b0" strokeWidth="1.200" /></>,
};

function BigButton({ icon, lines, box, menu }: { icon: string; lines: string[]; box: string; menu?: boolean }) {
  return (
    <button className={`flex h-full shrink-0 flex-col items-center pt-[5px] leading-[20px] whitespace-nowrap ${box}`}>
      <svg viewBox="0 0 40 40" className="mb-[3px] size-[40px]">{big[icon]}</svg>
      {lines.map((l) => <span key={l}>{l}</span>)}
      {menu && <Caret className="mt-[7px] w-[7px] text-[#666]" />}
    </button>
  );
}

function SmallColumn({ items, box = "" }: { items: [string, string, boolean?][]; box?: string }) {
  return (
    <div className={`flex shrink-0 flex-col pt-[3px] pl-[3px] ${box}`}>
      {items.map(([icon, label, off]) => (
        <button key={label} disabled={off} className={`flex h-[29px] items-center gap-1 whitespace-nowrap ${off ? "text-[#b0b0b0]" : ""}`}>
          <svg viewBox="0 0 20 20" className="size-5 overflow-visible">{small[icon]}</svg>
          {label}
        </button>
      ))}
    </div>
  );
}

function Group({ label, box, children }: { label: string; box: string; children: ReactNode }) {
  return (
    <div className="flex shrink-0">
      <div className={`flex flex-col ${box}`}>
        <div className="flex h-[92px]">{children}</div>
        <div className="flex-1 text-center text-[13px] leading-[22px]">{label}</div>
      </div>
      <span className="my-[5px] w-px bg-[#b5b5b5]" />
    </div>
  );
}

function Ribbon() {
  return (
    <div className="flex h-[115px] shrink-0 border-b border-[#d2d2d2] bg-[#f3f3f3] text-[14px] text-[#262626]">
      <Group label="Code" box="w-[318px]">
        <BigButton icon="vb" lines={["Visual", "Basic"]} box="ml-[10px] w-[50px]" />
        <BigButton icon="macros" lines={["Macros"]} box="w-[56px]" />
        <SmallColumn items={[["record", "Record Macro"], ["relative", "Use Relative References"], ["warn", "Macro Security"]]} />
      </Group>
      <Group label="Add-ins" box="w-[185px]">
        <BigButton icon="addins" lines={["Add-", "ins"]} box="ml-[12px] w-[48px]" />
        <BigButton icon="gears" lines={["Excel", "Add-ins"]} box="w-[60px]" />
        <BigButton icon="com" lines={["COM", "Add-ins"]} box="w-[54px]" />
      </Group>
      <Group label="Controls" box="w-[234px]">
        <BigButton icon="insert" lines={["Insert"]} menu box="ml-[13px] w-[48px]" />
        <BigButton icon="design" lines={["Design", "Mode"]} box="w-[54px]" />
        <SmallColumn items={[["props", "Properties"], ["code", "View Code"], ["run", "Run Dialog"]]} />
      </Group>
      <Group label="XML" box="w-[296px]">
        <BigButton icon="source" lines={["Source"]} box="ml-[10px] w-[52px]" />
        <SmallColumn box="w-[142px]" items={[["map", "Map Properties", true], ["expand", "Expansion Packs"], ["refresh", "Refresh Data", true]]} />
        <SmallColumn items={[["import", "Import"], ["export", "Export", true]]} />
      </Group>
      <button aria-label="Collapse ribbon" className="mr-[11px] mb-1 ml-auto self-end"><svg viewBox="0 0 12 7" className="w-3" fill="none" stroke="#444" strokeWidth="1.300"><path d="M.5 6.500L6 1l5.500 5.500" /></svg></button>
    </div>
  );
}

function FormulaBar() {
  return (
    <div className="flex h-[54px] shrink-0 items-center px-[6px]">
      <label className="flex h-[31px] w-[128px] items-center border border-[#c6c6c6] bg-white pr-[8px] pl-[6px]">
        <input aria-label="Name box" defaultValue="O11" className="min-w-0 flex-1 text-[15px] text-[#444] outline-none" />
        <Caret className="w-[8px] text-[#777]" />
      </label>
      <svg viewBox="0 0 4 14" className="mx-4 w-1" fill="#a6a6a6"><path d="M0 0h4v3H0zM0 5.500h4v3H0zM0 11h4v3H0z" /></svg>
      <div className="flex h-[31px] w-[138px] items-center justify-between border border-[#c6c6c6] bg-white px-[14px]">
        <button aria-label="Cancel" className="text-[#bdbdbd]"><Cross className="size-4" w={2} /></button>
        <button aria-label="Enter"><svg viewBox="0 0 18 16" className="h-[15px] w-[17px]" fill="none" stroke="#bdbdbd" strokeWidth="3"><path d="M1 9l5 5L17 1" /></svg></button>
        <button aria-label="Insert function" className="font-['Liberation_Serif',serif] text-[20px] leading-[20px] font-bold text-[#666] italic">f<span className="text-[15px]">x</span></button>
      </div>
      <label className="ml-[3px] flex h-[31px] flex-1 items-center border border-[#c6c6c6] bg-white pr-[5px]">
        <input aria-label="Formula" className="h-full flex-1 outline-none" />
        <Chevron className="w-[10px] text-[#666]" />
      </label>
    </div>
  );
}

/* ---------- excel: worksheet ---------- */

const columns: [string, string][] = [
  ["A", "w-[95px]"], ["B", "w-[95px]"], ["C", "w-[95px]"], ["D", "w-[95px]"], ["E", "w-[95px]"], ["F", "w-[95px]"], ["G", "w-[95px]"], ["H", "w-[95px]"],
  ["I", "w-[63px]"], ["J", "w-[108px]"], ["K", "w-[119px]"], ["L", "w-[146px]"], ["M", "w-[90px]"], ["N", "w-[89px]"], ["O", "w-[171px]"],
  ["P", "w-[57px]"], ["Q", "w-[108px]"], ["R", "w-[95px]"], ["S", ""],
];

const prices = `20160101 41.81 41.81 41.81 41.81 0|20160104 41.06 41.19 40.34 40.69 3287300|20160105 40.73 40.95 40.34 40.55 2587200|20160106 40.24 40.99 40.05 40.73 2103600|20160107 40.14 40.15 38.81 39 3504300|20160108 39.22 39.71 38.47 38.59 3736700|20160111 38.71 38.9 37.41 37.94 2818600|20160112 38.43 38.58 37.65 38.19 1989300|20160113 38.35 38.47 36.72 36.86 4206600|20160114 36.94 37.88 36.55 37.61 2893300|20160115 36.67 37.56 36.55 37.11 2994300|20160118 37.11 37.11 37.11 37.11 0|20160119 37.64 37.92 36.79 37.2 2506500|20160120 36.68 37.61 36.13 37.26 2469000|20160121 37.35 37.83 36.81 37.23 2298300|20160122 37.91 38.18 37.58 37.98 1834400|20160125 37.4 38.03 37.4 37.61 1831200|20160126 37.89 37.96 37.36 37.51 1755000|20160127 37.39 37.92 36.81 37.05 1479400|20160128 37.27 37.27 36.01 36.11 3479400|20160129 36.44 37.69 36.31 37.65 2959800|20160201 37.37 37.95 37 37.69 2666500|20160202 37.18 37.55 36.95 37.07 1742300|20160203 37.27 37.36 36.29 37.19 2128400|20160204 37.15 37.79 36.97 37.42 2833400|20160205 37.26 37.31 35.83 36.04 4424600|20160208 35.61 35.78 34.39 34.8 3888600|20160209 34.21 35.77 34.15 35.37 3464400|20160210 35.63 36.73 35.53 35.85 3169900|20160211 35.12 35.61 34.94 35.33 3224000|20160212 35.84 36.23 35.52 36.22 3923600`
  .split("|").map((r) => r.split(" "));

const summary = `A 3.75 8.97% 528576200|AA -1.53 -5.17% 5208239000|AAC -11.82 -62.01% 57179800|AAN 9.6 42.88% 184809000|AAP 18.61 12.36% 262665300|AAT 4.73 12.33% 49026400|AAV 1.67 32.87% 27358200|AB -0.4 -1.68% 64736300|ABB 3.34 18.84% 503779400|ABBV 3.38 5.71% 2034231800|ABC -25.52 -24.61% 647239900|ABEV 0.45 10.09% 4199335100|ABG -5.74 -8.51% 89828200|ABM 12.37 43.45% 79787400|ABR 0.31 4.34% 27556100|ABR-A 0.57 2.33% 792500|ABR-B 2.02 8.95% 795300|ABR-C 0.18 0.72% 521300|ABRN 0.7 2.85% 1759800|ABT -6.5 -14.47% 2298099600|ABX 8.6 116.53% 4996990800|AC 2.35 7.70% 6530000|ACC 8.43 20.39% 258457600|ACCO 5.92 83.03% 163653100|ACH 1.97 23.91% 11563400|ACM 6.33 21.08% 296759000|ACN 12.63 12.09% 650155300|ACP 2.08 18.33% 21179200|ACRE 2.29 20.02% 35062000|ACV 0.62 3.41% 12734300|ADC 12.06 35.48% 51966400`
  .split("|").map((r) => r.split(" "));

const greatest = [["Greatest % Increase", "SD", "11675.00%"], ["Greatest % Decrease", "DYN.W", "-91.49%"], ["Greatest Total Volume", "BAC", "27428529600"]];

const sheet: string[][] = [
  ["<ticker>", "<date>", "<open>", "<high>", "<low>", "<close>", "<vol>", "", "Ticker", "Yearly Change", "Percent Change", "Total Stock Volume", "", "", "", "Ticker", "Value", "", ""],
  ...prices.map((p, i) => ["A", ...p, "", ...summary[i], "", "", ...(greatest[i] ?? ["", "", ""]), "", ""]),
];

const isNumber = (v: string) => /^-?[\d.]+%?$/.test(v);

function Cell({ value, row, col }: { value: string; row: number; col: number }) {
  let tone = "border-[#d4d4d4]";
  if (col === 9 && row > 0) tone = value.startsWith("-") ? "border-[#f00] bg-[#f00]" : "border-[#0f0] bg-[#0f0]";
  const selected = row === 10 && col === 14;
  return (
    <td className={`border-r border-b px-[3px] ${tone} ${isNumber(value) ? "text-right" : ""} ${selected ? "relative" : ""}`}>
      {value}
      {selected && (
        <span className="absolute -inset-x-[2px] -inset-y-[2px] border-2 border-[#217346]">
          <span className="absolute -right-[3px] -bottom-[3px] size-[6px] border-t border-l border-white bg-[#217346]" />
        </span>
      )}
    </td>
  );
}

function Worksheet() {
  return (
    <div className="flex min-h-0 flex-1">
      <div className="min-w-0 flex-1 overflow-hidden border-r border-b border-[#9b9b9b] bg-white">
        <table className="w-full table-fixed border-separate border-spacing-0 font-['Lato','Open_Sans',sans-serif] text-[16px] leading-[21px] whitespace-nowrap text-black">
          <colgroup>
            <col className="w-[34px]" />
            {columns.map(([c, w]) => <col key={c} className={w} />)}
          </colgroup>
          <thead>
            <tr className="h-[22px] bg-[#e6e6e6]">
              <th className="border-r border-b border-[#b5b5b5]"><svg viewBox="0 0 14 14" className="ml-auto w-[14px]" fill="#b1b1b1" aria-label="Select all"><path d="M13 0v13H0z" /></svg></th>
              {columns.map(([c]) => (
                <th key={c} scope="col" className={`border-r font-normal ${c === "O" ? "border-b-2 border-r-[#b5b5b5] border-b-[#217346] bg-[#d2d2d2] leading-[20px] text-[#217346]" : "border-b border-r-[#b5b5b5] border-b-[#9b9b9b]"} ${c === "S" ? "pr-1 text-right" : ""}`}>{c}</th>
              ))}
            </tr>
          </thead>
          <tbody>
            {sheet.map((r, i) => (
              <tr key={i} className="h-[22px]">
                <th scope="row" className={`border-r border-b border-b-[#b5b5b5] font-normal ${i === 10 ? "border-r-2 border-r-[#217346] bg-[#d2d2d2] text-[#217346]" : "border-r-[#9b9b9b] bg-[#e6e6e6]"}`}>{i + 1}</th>
                {r.map((v, j) => <Cell key={j} value={v} row={i} col={j} />)}
              </tr>
            ))}
          </tbody>
        </table>
      </div>
      <div className="flex w-[26px] shrink-0 flex-col pr-[3px] pl-[4px]">
        <div className="flex flex-1 flex-col bg-[#dadada]">
          <button aria-label="Scroll up" className="flex h-[21px] items-center justify-center border border-[#ababab] bg-white text-[#777]"><Caret className="w-[9px] rotate-180" /></button>
          <span className="h-[20px] border border-[#ababab] bg-white" />
          <button aria-label="Scroll down" className="mt-auto flex h-[19px] items-center justify-center border border-[#ababab] bg-white text-[#777]"><Caret className="w-[9px]" /></button>
        </div>
      </div>
    </div>
  );
}

function SheetTabs() {
  return (
    <div className="flex h-[29px] shrink-0 border-b border-[#c6c6c6] text-[16px] text-[#444]">
      <div className="flex w-[103px] items-center gap-[22px] pl-[27px] text-[#c0c0c0]">
        <Caret className="w-[9px] rotate-90" />
        <Caret className="w-[9px] -rotate-90" />
      </div>
      <button className="h-[26px] w-[65px] border-b-[3px] border-[#217346] bg-white pb-[2px] text-[17px] leading-[20px] font-bold text-[#217346]">2016</button>
      <button className="my-1 w-[63px] border-r border-[#9b9b9b] pb-1 leading-[16px]">2015</button>
      <button className="my-1 w-[63px] border-r border-[#9b9b9b] pb-1 leading-[16px]">2014</button>
      <button aria-label="New sheet" className="ml-[33px]"><svg viewBox="0 0 20 20" className="size-5" fill="none" stroke="#8a8a8a" strokeWidth="1.300"><circle cx="10" cy="10" r="9.200" /><path d="M10 5v10M5 10h10" strokeWidth="2" /></svg></button>
      <div className="mr-[25px] ml-auto flex items-center">
        <svg viewBox="0 0 4 14" className="mr-[14px] w-1" fill="#a6a6a6"><path d="M0 0h4v3H0zM0 5.500h4v3H0zM0 11h4v3H0z" /></svg>
        <div className="flex h-[19px] w-[917px] bg-[#dadada] text-[#666]">
          <button aria-label="Scroll left" className="flex w-5 items-center justify-center border border-[#ababab] bg-white"><Caret className="w-[9px] rotate-90" /></button>
          <span className="w-[829px] border border-l-0 border-[#ababab] bg-white" />
          <button aria-label="Scroll right" className="ml-auto flex w-[19px] items-center justify-center border border-[#ababab] bg-white"><Caret className="w-[9px] -rotate-90" /></button>
        </div>
      </div>
    </div>
  );
}

function StatusBar() {
  return (
    <div className="flex h-[27px] shrink-0 items-center bg-[#f3f3f3] pl-[11px] text-[12px] text-[#444]">
      <button aria-label="Record macro"><svg viewBox="0 0 16 16" className="size-4"><path d="M2 3h13v12.500H2z" fill="#fff" stroke="#555" /><path d="M8 1h7v4H8z" fill="#555" /><path d="M4 8h9M4 10.500h9M4 13h9" stroke="#555" strokeDasharray="2.500 1" /><circle cx="4" cy="3.500" r="3.500" fill="#555" /></svg></button>
      <button className="ml-auto flex items-center gap-px">
        <svg viewBox="0 0 20 18" className="h-[18px] w-5"><path d="M0 0h19v12H0z" fill="#444" /><circle cx="13" cy="13" r="5.500" fill="#f3f3f3" /><circle cx="13" cy="13" r="3" fill="none" stroke="#555" strokeWidth="2" /><circle cx="13" cy="13" r="4.700" fill="none" stroke="#555" strokeWidth="1.500" strokeDasharray="2 1.700" /><path d="M3 16h7" stroke="#444" strokeWidth="2" /></svg>
        Display Settings
      </button>
      <button aria-label="Normal view" className="ml-6 flex h-full w-[50px] items-center justify-center bg-[#c6c6c6]"><svg viewBox="0 0 16 16" className="size-4" fill="none" stroke="#666" strokeWidth="1.300"><path d="M.7.7h14.600v14.600H.7zM.7 5.500h14.600M.7 10.500h14.600M5.500.7v14.600M10.500.7v14.600" /></svg></button>
      <button aria-label="Page layout view" className="flex w-[50px] justify-center"><svg viewBox="0 0 16 16" className="size-4" fill="none" stroke="#666" strokeWidth="1.200"><path d="M.7.7h14.600v14.600H.7zM3.500 3h9v10h-9zM5.500 5.500h5M5.500 8h5M5.500 10.500h5" /></svg></button>
      <button aria-label="Page break view" className="flex w-[50px] justify-center"><svg viewBox="0 0 16 16" className="size-4" fill="none" stroke="#666" strokeWidth="1.200"><path d="M.7.7h14.600v14.600H.7zM.7 10.500H11V.7M5.500.7v9.800" /></svg></button>
      <button aria-label="Zoom out" className="ml-[7px] flex h-full w-[12px] items-center"><span className="h-[2px] w-[10px] bg-[#555]" /></button>
      <div className="relative ml-[5px] flex w-[125px] items-center">
        <span className="absolute left-[62px] h-[11px] w-px bg-[#a6a6a6]" />
        <input aria-label="Zoom" type="range" min={0} max={100} defaultValue={42} className="relative h-[14px] w-full appearance-none bg-[linear-gradient(#a6a6a6,#a6a6a6)] bg-[length:100%_1px] bg-center bg-no-repeat [&::-webkit-slider-thumb]:h-[14px] [&::-webkit-slider-thumb]:w-[6px] [&::-webkit-slider-thumb]:appearance-none [&::-webkit-slider-thumb]:bg-[#666]" />
      </div>
      <button aria-label="Zoom in" className="ml-[6px]"><svg viewBox="0 0 10 10" className="size-[10px]" stroke="#555" strokeWidth="1.500"><path d="M5 0v10M0 5h10" /></svg></button>
      <span className="mr-[16px] ml-[16px]">85%</span>
    </div>
  );
}

const trayIcon = "h-[19px] w-[19px]";

function RightTaskbar() {
  const cell = "flex h-full w-[60px] shrink-0 items-center justify-center text-white";
  return (
    <footer className="flex h-[50px] shrink-0 bg-linear-to-r from-[#3b3f47] via-[#404347] to-[#2f3542]">
      <button aria-label="Start" className={cell}><WindowsLogo className="size-5" /></button>
      <label className="flex w-[430px] shrink-0 items-center gap-[15px] border border-[#c8c8c8] bg-[#f2f2f2] pl-[14px] text-[#222]">
        <Magnifier flip className="size-5" w={1.800} />
        <input aria-label="Type here to search" placeholder="Type here to search" className="min-w-0 flex-1 text-[17px] outline-none placeholder:text-[#333]" />
      </label>
      <button aria-label="Cortana" className={cell}><CortanaRing className="size-5" /></button>
      <button aria-label="Task view" className={cell}><TaskView className="size-5" /></button>
      <div className="ml-[3px] flex">{apps.map((a) => <AppButton key={a.name} app={a} />)}</div>
      <div className="ml-auto flex shrink-0 items-center text-white">
        <button aria-label="Get help" className="mr-[15px]"><svg viewBox="0 0 28 28" className="size-7"><circle cx="13" cy="14" r="12.500" fill="#0a9bd8" stroke="#fff" strokeWidth="2" /><path d="M9 10.500q0-4 4-4t4 3.700q0 2.300-2.300 3.500-1.500.9-1.500 3M13.200 19v2.500" fill="none" stroke="#fff" strokeWidth="2.600" /><circle cx="22.500" cy="20" r="5.500" fill="#e81123" /><path d="M22.500 16.500v4.500M22.500 22v1.800" stroke="#fff" strokeWidth="1.700" /></svg></button>
        <button aria-label="Show hidden icons" className="mr-[13px]"><svg viewBox="0 0 16 10" className="w-4" fill="none" stroke="#fff" strokeWidth="1.400"><path d="M1 9l7-7.500L15 9" /></svg></button>
        <button aria-label="Meet now" className="mr-[10px]"><svg viewBox="0 0 19 19" className={trayIcon} fill="none" stroke="#fff" strokeWidth="1.200"><rect x="3" y="5" width="9" height="9" rx="2" /><path d="M12 8.500l4-2v6l-4-2M4.500 2q5-2 10 0M4.500 17q5 2 10 0" /></svg></button>
        <button aria-label="OneDrive" className="mr-[11px]"><svg viewBox="0 0 20 20" className={trayIcon}><path d="M3 16a3.500 3.500 0 0 1 0-7 5.500 5.500 0 0 1 10-2 4.500 4.500 0 0 1 4 9z" fill="#a8a8a8" /><path d="M7 16a4 4 0 0 1 .5-8 7 7 0 0 1 7 2 3.200 3.200 0 0 1 2 6z" fill="#fff" /></svg></button>
        <button aria-label="Battery" className="mr-[10px]"><svg viewBox="0 0 20 20" className={trayIcon} fill="none" stroke="#fff" strokeWidth="1.300"><path d="M5 7h12v8H3v-4" /><path d="M7 9h8.500v4.500H7z" fill="#fff" /><path d="M18.500 9v4M1 3v3q0 2 2 2t2-2V3M3 8v3" /></svg></button>
        <button aria-label="Volume" className="mr-[11px]"><svg viewBox="0 0 20 20" className={trayIcon} fill="none" stroke="#fff" strokeWidth="1.200"><path d="M1 8h3l4-4v12l-4-4H1zM11 8q1.500 2 0 4M13.500 6q3 4 0 8M16 4q4.500 6 0 12" /></svg></button>
        <button className="flex flex-col items-center text-[14px] leading-[23px]"><span>10:19 PM</span><span>12/30/2020</span></button>
        <button aria-label="Notifications" className="mr-[26px] ml-[19px]"><svg viewBox="0 0 20 20" className="size-5" fill="none" stroke="#fff" strokeWidth="1.300"><path d="M1 1h18v14h-6l-3 3.500L7 15H1z" /></svg></button>
        <span className="mr-1 h-[50px] w-px bg-[#6d7178]" />
      </div>
    </footer>
  );
}

function Excel() {
  return (
    <section aria-label="Excel" className="flex h-screen min-w-0 flex-col overflow-hidden bg-[#e6e6e6] font-['Open_Sans','Noto_Sans',sans-serif]">
      <header className="relative shrink-0 bg-[#217346]">
        <svg viewBox="0 0 680 81" className="absolute top-0 right-0 h-full w-[680px]" fill="#24653f" opacity=".9" aria-hidden="true">
          <path d="M80 46C74 30 82 2 105 2q18 2 22 16 34-6 36 10 0 12-8 16l12-3q-2 9-20 9-30-8-52-4-12 0-16 4z" opacity=".5" />
          <path d="M196 0h95q8 10 4 25t-5 32q-22-3-40 0-45 12-63-2-6-6 5-4-12-25 4-51z" opacity=".6" />
          <path d="M324 0h190q6 30-12 40l17-4q10 0 4 8-12 22-62 15-60-20-100-12-26 2-36 8 0-12 10-22-18-14-11-33z" />
          <path d="M603 44q-4-10 12-12 14 2 16 12 14-4 24 4 12 8 25 6v12q-50-6-70 0-12-8-7-22z" />
        </svg>
        <div className="relative">
          <TitleBar />
          <RibbonTabs />
        </div>
      </header>
      <Ribbon />
      <FormulaBar />
      <Worksheet />
      <SheetTabs />
      <StatusBar />
      <RightTaskbar />
    </section>
  );
}

export default function App() {
  return (
    <div className="grid min-h-screen grid-cols-2">
      <Browser />
      <Excel />
    </div>
  );
}
